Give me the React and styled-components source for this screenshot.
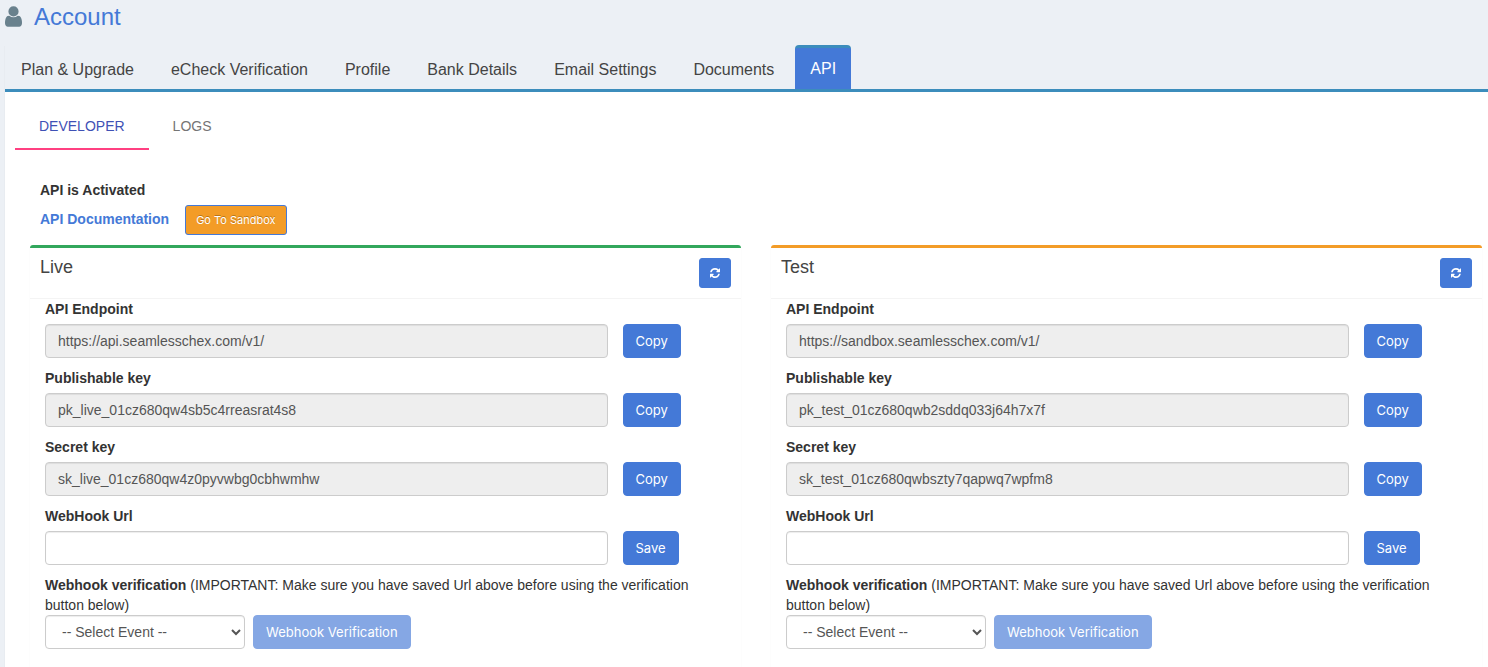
import React, { useId } from "react";
import styled, { createGlobalStyle, css } from "styled-components";

const GlobalStyle = createGlobalStyle`
  *, *::before, *::after { box-sizing: border-box; }
  body {
    margin: 0;
    background: #ecf0f5;
    color: #333;
    font: 14px/20px "Liberation Sans", Arial, sans-serif;
  }
  #root { display: flex; flex-direction: column; min-height: 100vh; }
`;

const Page = styled.div`
  flex: 1;
  display: flex;
  flex-direction: column;
  padding-left: 5px;
`;

const PageTitle = styled.h1`
  display: flex;
  align-items: center;
  gap: 12px;
  height: 33px;
  margin: 0 0 12px;
  font-size: 24px;
  line-height: 32px;
  font-weight: 400;
  color: #4479d7;
`;

const UserGlyph = styled.svg`
  width: 17px;
  height: 21px;
  fill: #69818d;
`;

const TabsPanel = styled.div`
  flex: 1;
  display: flex;
  flex-direction: column;
  box-shadow: 0 1px 1px rgba(0, 0, 0, 0.1);
`;

const MainTabs = styled.nav`
  display: flex;
  gap: 5px;
  height: 47px;
  border-bottom: 3px solid #3c8dbc;
`;

const MainTab = styled.a`
  padding: 10px 15px;
  border: 1px solid transparent;
  border-top-width: 3px;
  font-size: 16px;
  line-height: 23px;
  color: #444;
  text-decoration: none;
  ${(p) =>
    p.$active
      ? css`
          padding-top: 9px;
          border-width: 3px 0 0;
          border-top-color: #3c8dbc;
          border-radius: 4px 4px 0 0;
          background: #4479d7;
          color: #fff;
        `
      : null}
`;

const Content = styled.main`
  flex: 1;
  display: flex;
  flex-direction: column;
  padding-top: 10px;
  background: #fff;
`;

const SubTabs = styled.div`
  display: flex;
  padding-left: 10px;
`;

const SubTab = styled.button`
  height: 48px;
  padding: 2px 24px 0;
  border: 0;
  border-bottom: 2px solid ${(p) => (p.$active ? "#ff4081" : "transparent")};
  background: none;
  font: inherit;
  text-transform: uppercase;
  color: ${(p) => (p.$active ? "#3f51b5" : "#757575")};
`;

const Status = styled.section`
  padding: 30px 35px 10px;
  font-weight: 700;
`;

const StatusText = styled.p`
  margin: 0 0 5px;
`;

const StatusActions = styled.div`
  display: flex;
  align-items: baseline;
  gap: 16px;
`;

const DocLink = styled.a`
  color: #4479d7;
  text-decoration: none;
`;

const Button = styled.button`
  height: 34px;
  padding: 0 12px;
  border: 1px solid #4479d7;
  border-radius: 4px;
  background: #4479d7;
  color: #fff;
  font: 400 13px/20px Inter, sans-serif;
  &:disabled { opacity: 0.65; }
`;

const SmallButton = styled(Button)`
  height: 30px;
  padding: 0 10px;
  border-radius: 3px;
  font-size: 11px;
  line-height: 18px;
`;

const SandboxButton = styled(SmallButton)`
  background: #f39c27;
  text-shadow: 0 -1px 0 rgba(0, 0, 0, 0.25);
`;

const Environments = styled.div`
  flex: 1;
  display: grid;
  grid-template-columns: 1fr 1fr;
  gap: 30px;
  padding: 0 6px 0 25px;
`;

const Card = styled.section`
  border-top: 3px solid ${(p) => p.$accent};
  border-radius: 3px 3px 0 0;
  box-shadow: 0 1px 1px rgba(0, 0, 0, 0.1);
`;

const CardHeader = styled.header`
  display: flex;
  justify-content: space-between;
  align-items: flex-start;
  padding: 10px;
  border-bottom: 1px solid #f4f4f4;
`;

const CardTitle = styled.h2`
  margin: 0;
  font-size: 18px;
  line-height: 18px;
  font-weight: 400;
  color: #444;
`;

const RefreshGlyph = styled.svg`
  display: block;
  width: 10px;
  height: 10px;
  fill: currentColor;
`;

const CardBody = styled.div`
  padding-bottom: 15px;
`;

const Field = styled.div`
  display: grid;
  grid-template-columns: 5fr 1fr;
  row-gap: 5px;
  margin-bottom: 10px;
`;

const FieldLabel = styled.label`
  grid-column: 1 / -1;
  padding: 0 15px;
  font-weight: 700;
`;

const InputCell = styled.div`
  padding: 0 15px;
`;

const controlStyle = css`
  height: 34px;
  border: 1px solid #ccc;
  border-radius: 4px;
  color: #555;
  font: inherit;
  box-shadow: inset 0 1px 1px rgba(0, 0, 0, 0.075);
`;

const TextInput = styled.input`
  ${controlStyle}
  display: block;
  width: 100%;
  padding: 6px 12px;
  background: ${(p) => (p.readOnly ? "#eee" : "#fff")};
`;

const Verification = styled.div`
  padding: 0 15px;
`;

const VerificationLabel = styled.label`
  display: block;
`;

const VerificationRow = styled.div`
  display: flex;
  gap: 8px;
`;

const EventSelect = styled.select`
  ${controlStyle}
  width: 200px;
  padding: 6px 0 6px 12px;
  background: #fff;
`;

const tabs = ["Plan & Upgrade", "eCheck Verification", "Profile", "Bank Details", "Email Settings", "Documents", "API"];

const environments = [
  {
    name: "Live",
    accent: "#32a75c",
    endpoint: "https://api.seamlesschex.com/v1/",
    publishable: "pk_live_01cz680qw4sb5c4rreasrat4s8",
    secret: "sk_live_01cz680qw4z0pyvwbg0cbhwmhw",
  },
  {
    name: "Test",
    accent: "#f39c27",
    endpoint: "https://sandbox.seamlesschex.com/v1/",
    publishable: "pk_test_01cz680qwb2sddq033j64h7x7f",
    secret: "sk_test_01cz680qwbszty7qapwq7wpfm8",
  },
];

function KeyField({ label, value }) {
  const id = useId();
  const editable = value === undefined;
  return (
    <Field>
      <FieldLabel htmlFor={id}>{label}</FieldLabel>
      <InputCell>
        <TextInput id={id} type="text" defaultValue={value} readOnly={!editable} />
      </InputCell>
      <div>
        <Button type="button">{editable ? "Save" : "Copy"}</Button>
      </div>
    </Field>
  );
}

function EnvironmentCard({ env }) {
  const eventId = useId();
  return (
    <Card $accent={env.accent}>
      <CardHeader>
        <CardTitle>{env.name}</CardTitle>
        <SmallButton type="button" aria-label={`Refresh ${env.name} keys`}>
          <RefreshGlyph viewBox="0 0 1536 1536" aria-hidden="true">
            <path d="M1511 928q0 5-1 7-64 268-268 434.500t-478 166.500q-146 0-282.500-55t-243.500-157l-129 129q-19 19-45 19t-45-19-19-45v-448q0-26 19-45t45-19h448q26 0 45 19t19 45-19 45l-137 137q71 66 161 102t187 36q134 0 250-65t186-179q11-17 53-117 8-23 30-23h192q13 0 22.500 9.500t9.500 22.500zm25-800v448q0 26-19 45t-45 19h-448q-26 0-45-19t-19-45 19-45l138-138q-148-137-349-137-134 0-250 65t-186 179q-11 17-53 117-8 23-30 23h-199q-13 0-22.500-9.500t-9.500-22.500v-7q65-268 270-434.500t480-166.500q146 0 284 55.500t245 156.500l130-129q19-19 45-19t45 19 19 45z" />
          </RefreshGlyph>
        </SmallButton>
      </CardHeader>
      <CardBody>
        <KeyField label="API Endpoint" value={env.endpoint} />
        <KeyField label="Publishable key" value={env.publishable} />
        <KeyField label="Secret key" value={env.secret} />
        <KeyField label="WebHook Url" />
        <Verification>
          <VerificationLabel htmlFor={eventId}>
            <strong>Webhook verification</strong> (IMPORTANT: Make sure you have saved Url above before using the
            verification button below)
          </VerificationLabel>
          <VerificationRow>
            <EventSelect id={eventId}>
              <option>-- Select Event --</option>
            </EventSelect>
            <Button type="button" disabled>
              Webhook Verification
            </Button>
          </VerificationRow>
        </Verification>
      </CardBody>
    </Card>
  );
}

export default function App() {
  return (
    <>
      <GlobalStyle />
      <Page>
        <PageTitle>
          <UserGlyph viewBox="0 128 1280 1536" aria-hidden="true">
            <path d="M1280 1399q0 109-62.500 187t-150.500 78h-854q-88 0-150.500-78t-62.500-187q0-85 8.500-160.500t31.500-152 58.500-131 94-89 134.500-34.500q131 128 313 128t313-128q76 0 134.500 34.500t94 89 58.500 131 31.500 152 8.500 160.500zm-256-887q0 159-112.500 271.500t-271.500 112.500-271.500-112.500-112.500-271.500 112.500-271.500 271.500-112.500 271.500 112.500 112.500 271.500z" />
          </UserGlyph>
          Account
        </PageTitle>
        <TabsPanel>
          <MainTabs>
            {tabs.map((tab) => (
              <MainTab key={tab} href="#" $active={tab === "API"}>
                {tab}
              </MainTab>
            ))}
          </MainTabs>
          <Content>
            <SubTabs role="tablist">
              <SubTab type="button" role="tab" aria-selected="true" $active>
                Developer
              </SubTab>
              <SubTab type="button" role="tab" aria-selected="false">
                Logs
              </SubTab>
            </SubTabs>
            <Status>
              <StatusText>API is Activated</StatusText>
              <StatusActions>
                <DocLink href="#">API Documentation</DocLink>
                <SandboxButton type="button">Go To Sandbox</SandboxButton>
              </StatusActions>
            </Status>
            <Environments>
              {environments.map((env) => (
                <EnvironmentCard key={env.name} env={env} />
              ))}
            </Environments>
          </Content>
        </TabsPanel>
      </Page>
    </>
  );
}
